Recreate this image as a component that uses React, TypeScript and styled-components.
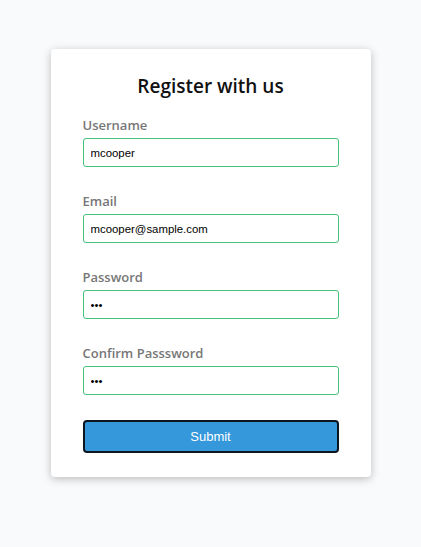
import styled, { createGlobalStyle } from "styled-components";

const GlobalStyle = createGlobalStyle`
  * {
    box-sizing: border-box;
  }
  body {
    margin: 0;
    background-color: #f9fafb;
    font-family: "Open Sans", "Noto Sans", sans-serif;
  }
`;

const fields = [
  { id: "username", label: "Username", type: "text", value: "mcooper" },
  { id: "email", label: "Email", type: "text", value: "mcooper@sample.com" },
  { id: "password", label: "Password", type: "password", value: "123" },
  { id: "password2", label: "Confirm Passsword", type: "password", value: "123" },
];

const App = () => {
  return (
    <>
      <GlobalStyle />
      <StyledPage>
        <StyledContainer>
          <StyledForm onSubmit={(e) => e.preventDefault()}>
            <StyledTitle>Register with us</StyledTitle>
            {fields.map((f) => (
              <StyledFormControl key={f.id}>
                <StyledLabel htmlFor={f.id}>{f.label}</StyledLabel>
                <StyledInput id={f.id} type={f.type} defaultValue={f.value} $success />
              </StyledFormControl>
            ))}
            <StyledButton type="submit">Submit</StyledButton>
          </StyledForm>
        </StyledContainer>
      </StyledPage>
    </>
  );
};

export default App;

const StyledPage = styled.div`
  display: flex;
  justify-content: center;
  padding-top: 49px;
  min-height: 100vh;
`;

const StyledContainer = styled.div`
  width: 320px;
  height: fit-content;
  background-color: #fff;
  border-radius: 4px;
  box-shadow: 0 2px 8px rgba(0, 0, 0, 0.25);
`;

const StyledForm = styled.form`
  padding: 24px 32px;
`;

const StyledTitle = styled.h2`
  margin: 0 0 16px;
  text-align: center;
  font-size: 19px;
  line-height: 27px;
  font-weight: 600;
  color: #111;
`;

const StyledFormControl = styled.div`
  margin-bottom: 8px;
  padding-bottom: 17px;
`;

const StyledLabel = styled.label`
  display: block;
  margin-bottom: 3px;
  color: #777;
  font-size: 13px;
  line-height: 19px;
  font-weight: 600;
`;

const StyledInput = styled.input<{ $success?: boolean }>`
  display: block;
  width: 100%;
  height: 29px;
  padding: 0 7px;
  border: 1px solid ${({ $success }) => ($success ? "#45c27a" : "#f0f0f0")};
  border-radius: 3px;
  font-family: "Liberation Sans", Arial, sans-serif;
  font-size: 11.4px;
  color: #000;
  outline: none;
`;

const StyledButton = styled.button`
  display: block;
  width: 100%;
  height: 33px;
  margin: 0;
  background-color: #3498db;
  border: 2px solid #0b1620;
  border-radius: 4px;
  color: #fff;
  font-family: "Liberation Sans", Arial, sans-serif;
  font-size: 13px;
  cursor: pointer;
`;
